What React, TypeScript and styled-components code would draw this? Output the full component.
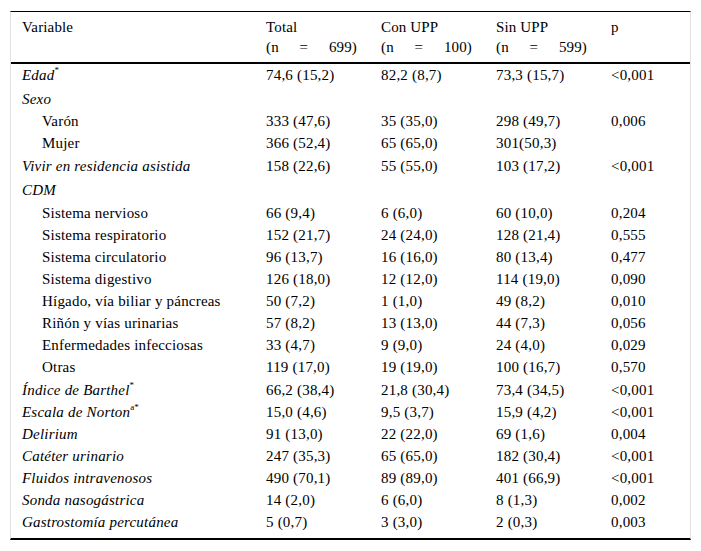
import styled, { createGlobalStyle } from 'styled-components';

const GlobalStyle = createGlobalStyle`
  body {
    margin: 0;
    background: #fff;
  }
`;

interface RowData {
  label: string;
  sup?: string;
  italic?: boolean;
  indent?: boolean;
  extra?: number;
  values: string[];
}

const rows: RowData[] = [
  { label: 'Edad', sup: '*', italic: true, values: ['74,6 (15,2)', '82,2 (8,7)', '73,3 (15,7)', '<0,001'] },
  { label: 'Sexo', italic: true, extra: 2, values: ['', '', '', ''] },
  { label: 'Varón', indent: true, values: ['333 (47,6)', '35 (35,0)', '298 (49,7)', '0,006'] },
  { label: 'Mujer', indent: true, values: ['366 (52,4)', '65 (65,0)', '301(50,3)', ''] },
  { label: 'Vivir en residencia asistida', italic: true, extra: 1, values: ['158 (22,6)', '55 (55,0)', '103 (17,2)', '<0,001'] },
  { label: 'CDM', italic: true, extra: 2, values: ['', '', '', ''] },
  { label: 'Sistema nervioso', indent: true, extra: 1, values: ['66 (9,4)', '6 (6,0)', '60 (10,0)', '0,204'] },
  { label: 'Sistema respiratorio', indent: true, values: ['152 (21,7)', '24 (24,0)', '128 (21,4)', '0,555'] },
  { label: 'Sistema circulatorio', indent: true, values: ['96 (13,7)', '16 (16,0)', '80 (13,4)', '0,477'] },
  { label: 'Sistema digestivo', indent: true, values: ['126 (18,0)', '12 (12,0)', '114 (19,0)', '0,090'] },
  { label: 'Hígado, vía biliar y páncreas', indent: true, values: ['50 (7,2)', '1 (1,0)', '49 (8,2)', '0,010'] },
  { label: 'Riñón y vías urinarias', indent: true, values: ['57 (8,2)', '13 (13,0)', '44 (7,3)', '0,056'] },
  { label: 'Enfermedades infecciosas', indent: true, values: ['33 (4,7)', '9 (9,0)', '24 (4,0)', '0,029'] },
  { label: 'Otras', indent: true, values: ['119 (17,0)', '19 (19,0)', '100 (16,7)', '0,570'] },
  { label: 'Índice de Barthel', sup: '*', italic: true, extra: 1, values: ['66,2 (38,4)', '21,8 (30,4)', '73,4 (34,5)', '<0,001'] },
  { label: 'Escala de Norton', sup: 'a*', italic: true, values: ['15,0 (4,6)', '9,5 (3,7)', '15,9 (4,2)', '<0,001'] },
  { label: 'Delirium', italic: true, values: ['91 (13,0)', '22 (22,0)', '69 (1,6)', '0,004'] },
  { label: 'Catéter urinario', italic: true, values: ['247 (35,3)', '65 (65,0)', '182 (30,4)', '<0,001'] },
  { label: 'Fluidos intravenosos', italic: true, values: ['490 (70,1)', '89 (89,0)', '401 (66,9)', '<0,001'] },
  { label: 'Sonda nasogástrica', italic: true, values: ['14 (2,0)', '6 (6,0)', '8 (1,3)', '0,002'] },
  { label: 'Gastrostomía percutánea', italic: true, values: ['5 (0,7)', '3 (3,0)', '2 (0,3)', '0,003'] },
];

const serif = `'Liberation Serif', 'Times New Roman', serif`;

const Frame = styled.div`
  margin: 11px 0 0 10px;
  width: 679px;
  border-top: 1px solid #000;
  border-bottom: 2px solid #000;
  border-left: 1px solid #e2e2e2;
  border-right: 1px solid #e2e2e2;
  font-family: ${serif};
`;

const Table = styled.table`
  width: 100%;
  border-collapse: collapse;
  table-layout: fixed;
  margin-bottom: 5px;
  font-family: ${serif};
  font-size: 15px;
  color: #000;
`;

const HeadCell = styled.th`
  padding: 5px 13px 5px 11px;
  font-family: ${serif};
  font-size: 15px;
  line-height: 20px;
  letter-spacing: 0.15px;
  font-weight: normal;
  text-align: left;
  vertical-align: top;
  border-bottom: 2px solid #000;
`;

const NLine = styled.span`
  display: block;
  width: 91px;
  text-align: justify;
  text-align-last: justify;
  white-space: nowrap;
`;

const Row = styled.tr<{ $extra: number }>`
  & > td {
    padding-top: ${props => props.$extra}px;
  }
`;

const Cell = styled.td`
  padding: 0 13px 0 11px;
  font-family: ${serif};
  font-size: 15px;
  line-height: 22px;
  letter-spacing: 0.2px;
  white-space: nowrap;
  text-align: left;
  color: #000;
`;

const LabelCell = styled(Cell)<{ $italic?: boolean; $indent?: boolean }>`
  font-style: ${props => (props.$italic ? 'italic' : 'normal')};
  padding-left: ${props => (props.$indent ? '31px' : '11px')};
`;

const Sup = styled.sup`
  font-size: 9px;
  line-height: 0;
  vertical-align: 7px;
  font-style: normal;
  letter-spacing: 0;
`;

const heads = [
  { title: 'Total', n: '(n = 699)' },
  { title: 'Con UPP', n: '(n = 100)' },
  { title: 'Sin UPP', n: '(n = 599)' },
];

export default function App() {
  return (
    <>
      <GlobalStyle />
      <Frame>
        <Table>
          <colgroup>
            <col style={{ width: 244 }} />
            <col style={{ width: 115 }} />
            <col style={{ width: 115 }} />
            <col style={{ width: 115 }} />
            <col />
          </colgroup>
          <thead>
            <tr>
              <HeadCell>Variable</HeadCell>
              {heads.map(h => (
                <HeadCell key={h.title}>
                  {h.title}
                  <NLine>{h.n}</NLine>
                </HeadCell>
              ))}
              <HeadCell>p</HeadCell>
            </tr>
          </thead>
          <tbody>
            {rows.map((r, i) => (
              <Row key={i} $extra={r.extra || 0}>
                <LabelCell $italic={r.italic} $indent={r.indent}>
                  {r.label}
                  {r.sup ? <Sup>{r.sup}</Sup> : null}
                </LabelCell>
                {r.values.map((v, j) => (
                  <Cell key={j}>{v}</Cell>
                ))}
              </Row>
            ))}
          </tbody>
        </Table>
      </Frame>
    </>
  );
}
